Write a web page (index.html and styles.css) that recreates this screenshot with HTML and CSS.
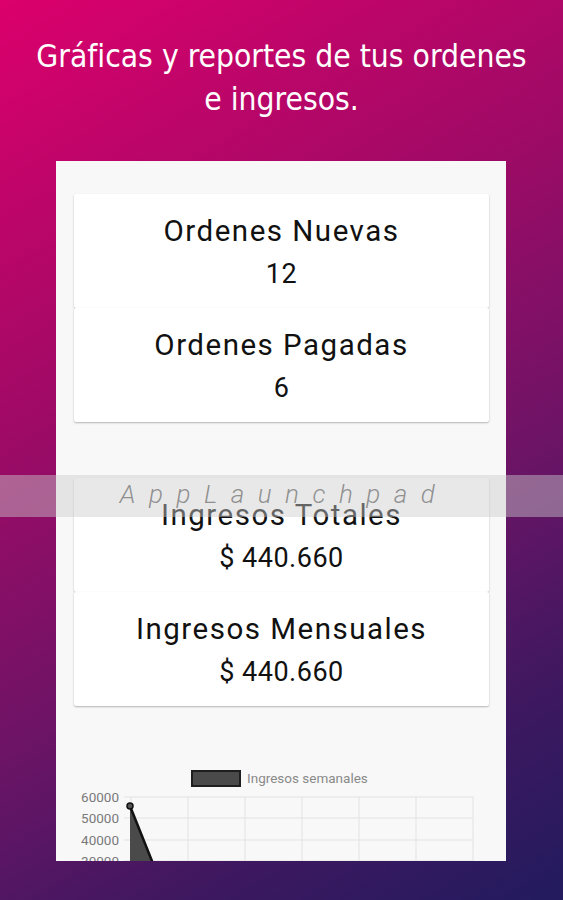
FILE: index.html
```html
<!doctype html>
<html lang="es">
	<head>
		<meta charset="utf-8">
		<meta name="viewport" content="width=device-width, initial-scale=1">
		<title>Reportes</title>

		<link rel="stylesheet" href="styles.css">
	</head>
	<body>
		<h1 class="headline">Gráficas y reportes de tus ordenes<br>e ingresos.</h1>

		<div class="panel">
			<div class="cardGroup">
				<div class="card">
					<div class="cardTitle">Ordenes Nuevas</div>
					<div class="cardValue">12</div>
				</div>
				<div class="card">
					<div class="cardTitle">Ordenes Pagadas</div>
					<div class="cardValue">6</div>
				</div>
			</div>

			<div class="cardGroup">
				<div class="card">
					<div class="cardTitle">Ingresos Totales</div>
					<div class="cardValue">$ 440.660</div>
				</div>
				<div class="card">
					<div class="cardTitle">Ingresos Mensuales</div>
					<div class="cardValue">$ 440.660</div>
				</div>
			</div>

			<svg class="chart" width="450" height="155" viewBox="0 0 450 155">
				<rect x="136" y="65" width="48" height="15" fill="#4a4a4a" stroke="#1e1e1e" stroke-width="2"/>
				<text x="191" y="77" class="legendText">Ingresos semanales</text>

				<g stroke="#e2e2e2" stroke-width="1">
					<line x1="75" y1="91" x2="75" y2="155"/>
					<line x1="132" y1="91" x2="132" y2="155"/>
					<line x1="189" y1="91" x2="189" y2="155"/>
					<line x1="246" y1="91" x2="246" y2="155"/>
					<line x1="303" y1="91" x2="303" y2="155"/>
					<line x1="360" y1="91" x2="360" y2="155"/>
					<line x1="417" y1="91" x2="417" y2="155"/>
					<line x1="68" y1="91" x2="417" y2="91"/>
					<line x1="68" y1="112" x2="417" y2="112"/>
					<line x1="68" y1="134" x2="417" y2="134"/>
					<line x1="68" y1="155" x2="417" y2="155"/>
				</g>

				<g class="axisText">
					<text x="63" y="96">60000</text>
					<text x="63" y="117">50000</text>
					<text x="63" y="139">40000</text>
					<text x="63" y="160">30000</text>
				</g>

				<polygon points="74,100 100,165 74,165" fill="#4a4a4a"/>
				<line x1="74" y1="100" x2="100" y2="165" stroke="#111" stroke-width="2.5"/>
				<circle cx="74" cy="100" r="3" fill="#555" stroke="#111" stroke-width="1.5"/>
			</svg>
		</div>

		<div class="watermark">AppLaunchpad</div>
	</body>
</html>
```

FILE: styles.css
```css
body {
	margin: 0;
	width: 563px;
	height: 900px;
	overflow: hidden;
	position: relative;
	background: linear-gradient(150deg, #dc006c 0%, #a00a66 35%, #6c1466 62%, #3e1860 82%, #221b5e 100%);
	font-family: Roboto, "Noto Sans", sans-serif;
}

.headline {
	margin: 0;
	padding: 35px 0 0;
	height: 125px;
	box-sizing: border-box;
	color: #fff;
	font-family: "DejaVu Sans Condensed", "DejaVu Sans", sans-serif;
	font-weight: 400;
	font-size: 31.5px;
	line-height: 43px;
	text-align: center;
}

.panel {
	width: 450px;
	height: 700px;
	margin: 36px 0 0 56px;
	background: #f8f8f8;
	padding-top: 33px;
	box-sizing: border-box;
	overflow: hidden;
}

.cardGroup {
	margin: 0 17px 56px 18px;
}

.cardGroup + .cardGroup {
	margin-bottom: 0;
}

.card {
	height: 114px;
	box-sizing: border-box;
	padding-top: 19px;
	background: #fff;
	border-radius: 2px;
	box-shadow: 0 1px 2px rgba(0, 0, 0, 0.28);
	text-align: center;
	color: #111;
}

.cardTitle {
	font-size: 29.5px;
	letter-spacing: 1.5px;
	line-height: 36px;
}

.cardValue {
	font-size: 27px;
	letter-spacing: 0.5px;
	line-height: 36px;
	margin-top: 7px;
}

.chart {
	display: block;
}

.legendText {
	font-family: Roboto, sans-serif;
	font-size: 13.5px;
	fill: #8a8a8a;
}

.axisText text {
	font-family: Roboto, sans-serif;
	font-size: 13.5px;
	fill: #7a7a7a;
	text-anchor: end;
}

.watermark {
	position: absolute;
	left: 0;
	top: 475px;
	width: 100%;
	height: 42px;
	background: rgba(205, 205, 205, 0.45);
	color: rgba(120, 120, 120, 0.8);
	font-family: Roboto, sans-serif;
	font-weight: 300;
	font-style: italic;
	font-size: 26px;
	letter-spacing: 13.5px;
	line-height: 38px;
	text-align: center;
	text-indent: 5px;
}
```
